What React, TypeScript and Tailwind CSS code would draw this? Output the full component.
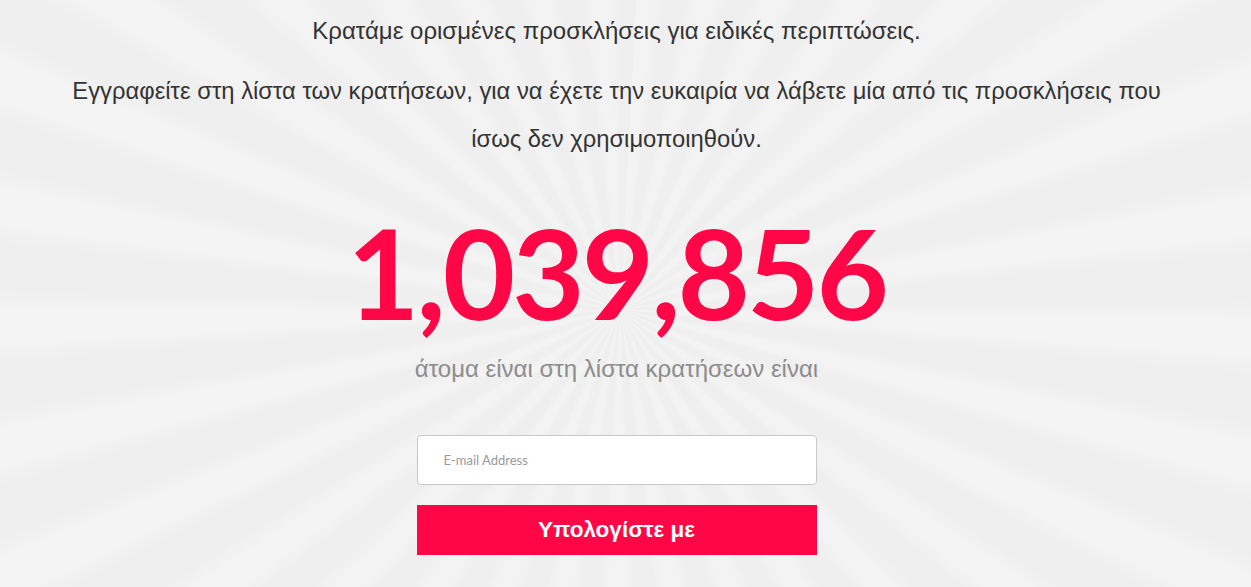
export default function App() {
  return (
    <div className="relative min-h-[587px] w-full overflow-hidden bg-[#efefef]">
      {/* sunburst rays */}
      <div className="pointer-events-none absolute inset-0 bg-[repeating-conic-gradient(from_3deg_at_620px_310px,#f3f3f3_0deg_3deg,#efefef_5deg_9deg,#f3f3f3_11deg)]" />
      <div className="relative flex flex-col items-center pr-[18px] pt-[16px] text-center">
        <p className="font-['Liberation_Sans',Arial,sans-serif] text-[24px] leading-[30px] text-[#333]">
          Κρατάμε ορισμένες προσκλήσεις για ειδικές περιπτώσεις.
        </p>
        <p className="mt-[21px] font-['Liberation_Sans',Arial,sans-serif] text-[23.8px] leading-[48px] text-[#333]">
          Εγγραφείτε στη λίστα των κρατήσεων, για να έχετε την ευκαιρία να λάβετε μία από τις προσκλήσεις που
          <br />
          ίσως δεν χρησιμοποιηθούν.
        </p>
        <div className="mt-[44px] font-['Lato',sans-serif] text-[125px] font-bold leading-[130px] tracking-[-3px] text-[#ff0746]">
          1,039,856
        </div>
        <p className="mt-[17px] font-['Liberation_Sans',Arial,sans-serif] text-[24px] leading-[30px] text-[#8c8c8c]">
          άτομα είναι στη λίστα κρατήσεων είναι
        </p>
        <div className="mt-[51px] flex w-[400px] flex-col gap-[20px]">
          <input
            type="text"
            placeholder="E-mail Address"
            className="h-[50px] w-full rounded-[4px] border border-[#c8c8c8] bg-white px-[26px] font-['Lato',sans-serif] text-[13px] text-[#555] outline-none placeholder:text-[#999]"
          />
          <button className="h-[50px] w-full bg-[#ff0746] font-['Liberation_Sans',Arial,sans-serif] text-[22.5px] font-bold text-white">
            Υπολογίστε με
          </button>
        </div>
      </div>
    </div>
  );
}
